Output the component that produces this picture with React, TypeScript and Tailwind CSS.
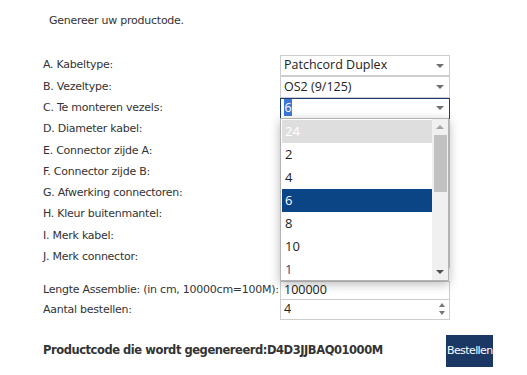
import React from "react";

const labelFont = { fontFamily: '"DejaVu Sans", Verdana, sans-serif' };

function Caret() {
  return (
    <span className="block w-0 h-0 border-l-[4px] border-r-[4px] border-t-[4px] border-l-transparent border-r-transparent border-t-[#6f6f6f]" />
  );
}

function SelectBox({ value, focused = false }: { value?: React.ReactNode; focused?: boolean }) {
  return (
    <div
      className={`w-[170px] h-full flex items-center justify-between pl-[3px] pr-[5px] border bg-white ${
        focused ? "border-[#1d3d6b]" : "border-[#cdcdcd]"
      } text-[12.5px] text-[#222] font-['Open_Sans',sans-serif]`}
    >
      <span className="leading-none">{value}</span>
      <Caret />
    </div>
  );
}

const rows: { label: string; value?: React.ReactNode; focused?: boolean }[] = [
  { label: "A. Kabeltype:", value: "Patchcord Duplex" },
  { label: "B. Vezeltype:", value: "OS2 (9/125)" },
  {
    label: "C. Te monteren vezels:",
    value: <span className="bg-[#3b78d6] text-white px-[0.5px]">6</span>,
    focused: true,
  },
  { label: "D. Diameter kabel:" },
  { label: "E. Connector zijde A:" },
  { label: "F. Connector zijde B:" },
  { label: "G. Afwerking connectoren:" },
  { label: "H. Kleur buitenmantel:" },
  { label: "I. Merk kabel:" },
  { label: "J. Merk connector:" },
];

const options = ["24", "2", "4", "6", "8", "10", "1"];

export default function App() {
  return (
    <div className="w-[527px] h-[375px] bg-white text-[#333] overflow-hidden" style={labelFont}>
      <div className="pt-[14px] pl-[49px] text-[11px] leading-[14px] tracking-[-0.25px]">
        Genereer uw productode.
      </div>

      <div className="relative mt-[27px] pl-[43px]">
        {rows.map((r) => (
          <div key={r.label} className="flex items-stretch h-[21.3px]">
            <div className="w-[237px] flex items-center text-[11px] tracking-[-0.25px]">{r.label}</div>
            <div>
              <SelectBox value={r.value} focused={r.focused} />
            </div>
          </div>
        ))}

        {/* open dropdown list */}
        <div className="absolute left-[280px] top-[63px] w-[169px] h-[163px] bg-white border border-[#b3b3b3] shadow-[0_3px_10px_rgba(0,0,0,0.28)] flex">
          <div className="flex-1 pl-[1px] pt-[1px] font-['Open_Sans',sans-serif] text-[13px] text-[#222]">
            {options.map((o, i) => (
              <div
                key={i}
                className={`h-[23px] flex items-center pl-[3px] ${
                  i === 0 ? "bg-[#dedede] text-white" : i === 3 ? "bg-[#0b4586] text-white" : ""
                } ${i === 6 ? "text-[#2f3f7a]" : ""}`}
              >
                {o}
              </div>
            ))}
          </div>
          <div className="w-[16px] bg-[#f0f0f0] flex flex-col items-center">
            <div className="h-[16px] flex items-center justify-center">
              <span className="block w-0 h-0 border-l-[4px] border-r-[4px] border-b-[4px] border-l-transparent border-r-transparent border-b-[#a3a3a3]" />
            </div>
            <div className="w-[13px] h-[57px] bg-[#c1c1c1]" />
            <div className="flex-1" />
            <div className="h-[17px] flex items-center justify-center">
              <span className="block w-0 h-0 border-l-[4px] border-r-[4px] border-t-[4px] border-l-transparent border-r-transparent border-t-[#505050]" />
            </div>
          </div>
        </div>

        <div className="flex items-stretch h-[19px] mt-[13px]">
          <div className="w-[237px] flex items-center text-[11px] tracking-[-0.25px]">
            Lengte Assemblie: (in cm, 10000cm=100M):
          </div>
          <div className="w-[170px] border border-[#cdcdcd] flex items-center pl-[3px] text-[12.5px] text-[#222] font-['Open_Sans',sans-serif]">
            100000
          </div>
        </div>
        <div className="flex items-stretch h-[20px]">
          <div className="w-[237px] flex items-center text-[11px] tracking-[-0.25px]">Aantal bestellen:</div>
          <div className="w-[170px] border border-[#cdcdcd] border-t-0 flex items-center justify-between pl-[3px] pr-[4px] text-[12.5px] text-[#222] font-['Open_Sans',sans-serif]">
            <span>4</span>
            <span className="flex flex-col gap-[4px]">
              <span className="block w-0 h-0 border-l-[3px] border-r-[3px] border-b-[4px] border-l-transparent border-r-transparent border-b-[#777]" />
              <span className="block w-0 h-0 border-l-[3px] border-r-[3px] border-t-[4px] border-l-transparent border-r-transparent border-t-[#777]" />
            </span>
          </div>
        </div>
      </div>

      <div className="mt-[15px] pl-[43px] w-[493px] h-[32px] flex items-center">
        <div className="text-[11.5px] font-bold tracking-[-0.45px] text-[#333]">
          Productcode die wordt gegenereerd:D4D3JJBAQ01000M
        </div>
        <div className="ml-auto w-[47px] h-[32px] bg-[#1b3865] text-white text-[11px] tracking-[-0.6px] flex items-center pl-[1px] overflow-hidden whitespace-nowrap">
          Bestellen
        </div>
      </div>
    </div>
  );
}
